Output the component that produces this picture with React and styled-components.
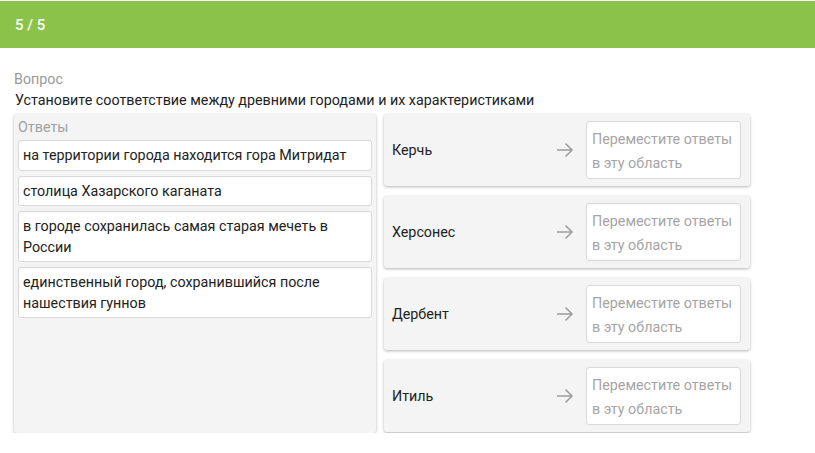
import React from "react";
import styled, { createGlobalStyle } from "styled-components";

const GlobalStyle = createGlobalStyle`
  body {
    margin: 0;
    background: #fff;
    font-family: Roboto, "Noto Sans", sans-serif;
    color: #222;
  }
`;

const answers = [
  "на территории города находится гора Митридат",
  "столица Хазарского каганата",
  "в городе сохранилась самая старая мечеть в России",
  "единственный город, сохранившийся после нашествия гуннов",
];

const cities = ["Керчь", "Херсонес", "Дербент", "Итиль"];

const Arrow = () => (
  <svg width="18" height="16" viewBox="0 0 18 16" fill="none" stroke="#9c9c9c" strokeWidth="1.5">
    <path d="M1 8h15M9.5 1.5L16 8l-6.5 6.5" />
  </svg>
);

const App = () => {
  return (
    <Page>
      <GlobalStyle />
      <Header>5 / 5</Header>
      <Content>
        <Caption>Вопрос</Caption>
        <Question>Установите соответствие между древними городами и их характеристиками</Question>
        <Board>
          <AnswersPanel>
            <PanelTitle>Ответы</PanelTitle>
            {answers.map((a) => (
              <AnswerCard key={a}>{a}</AnswerCard>
            ))}
          </AnswersPanel>
          <Targets>
            {cities.map((c) => (
              <TargetRow key={c}>
                <CityName>{c}</CityName>
                <ArrowWrap>
                  <Arrow />
                </ArrowWrap>
                <DropZone>Переместите ответы в эту область</DropZone>
              </TargetRow>
            ))}
          </Targets>
        </Board>
      </Content>
    </Page>
  );
};

export default App;

const Page = styled.div`
  padding-top: 1px;
`;

const Header = styled.div`
  height: 47px;
  background: #8bc34a;
  color: #fff;
  font-size: 15px;
  font-weight: 500;
  display: flex;
  align-items: center;
  padding-left: 15px;
`;

const Content = styled.div`
  padding: 22px 14px 0;
`;

const Caption = styled.div`
  font-size: 14.3px;
  line-height: 18px;
  color: #9a9a9a;
`;

const Question = styled.div`
  font-size: 14.3px;
  line-height: 20px;
  color: #222;
  margin-top: 2px;
  padding-left: 1px;
`;

const Board = styled.div`
  display: flex;
  gap: 8px;
  margin-top: 4px;
  align-items: flex-start;
`;

const AnswersPanel = styled.div`
  width: 362px;
  height: 319px;
  box-sizing: border-box;
  background: #f4f4f4;
  border-radius: 3px;
  box-shadow: 0 1px 3px rgba(0, 0, 0, 0.3);
  padding: 4px 4px;
  display: flex;
  flex-direction: column;
  gap: 5px;
`;

const PanelTitle = styled.div`
  font-size: 14.3px;
  line-height: 18px;
  color: #a0a0a0;
  margin-bottom: -1px;
`;

const AnswerCard = styled.div`
  background: #fff;
  border: 1px solid #d8d8d8;
  border-radius: 3px;
  padding: 4px 4px;
  font-size: 14.3px;
  line-height: 20.5px;
  color: #222;
`;

const Targets = styled.div`
  width: 366px;
  display: flex;
  flex-direction: column;
  gap: 10px;
`;

const TargetRow = styled.div`
  height: 72px;
  box-sizing: border-box;
  background: #f4f4f4;
  border-radius: 3px;
  box-shadow: 0 1px 3px rgba(0, 0, 0, 0.3);
  display: flex;
  align-items: center;
  padding: 0 9px 0 8px;
`;

const CityName = styled.div`
  flex: 1;
  font-size: 14.3px;
  color: #222;
`;

const ArrowWrap = styled.div`
  display: flex;
  margin-right: 12px;
`;

const DropZone = styled.div`
  width: 155px;
  height: 58px;
  box-sizing: border-box;
  background: #fff;
  border: 1px solid #d8d8d8;
  border-radius: 3px;
  padding: 5px 5px 3px;
  font-size: 14.3px;
  line-height: 24px;
  color: #a5a5a5;
`;
